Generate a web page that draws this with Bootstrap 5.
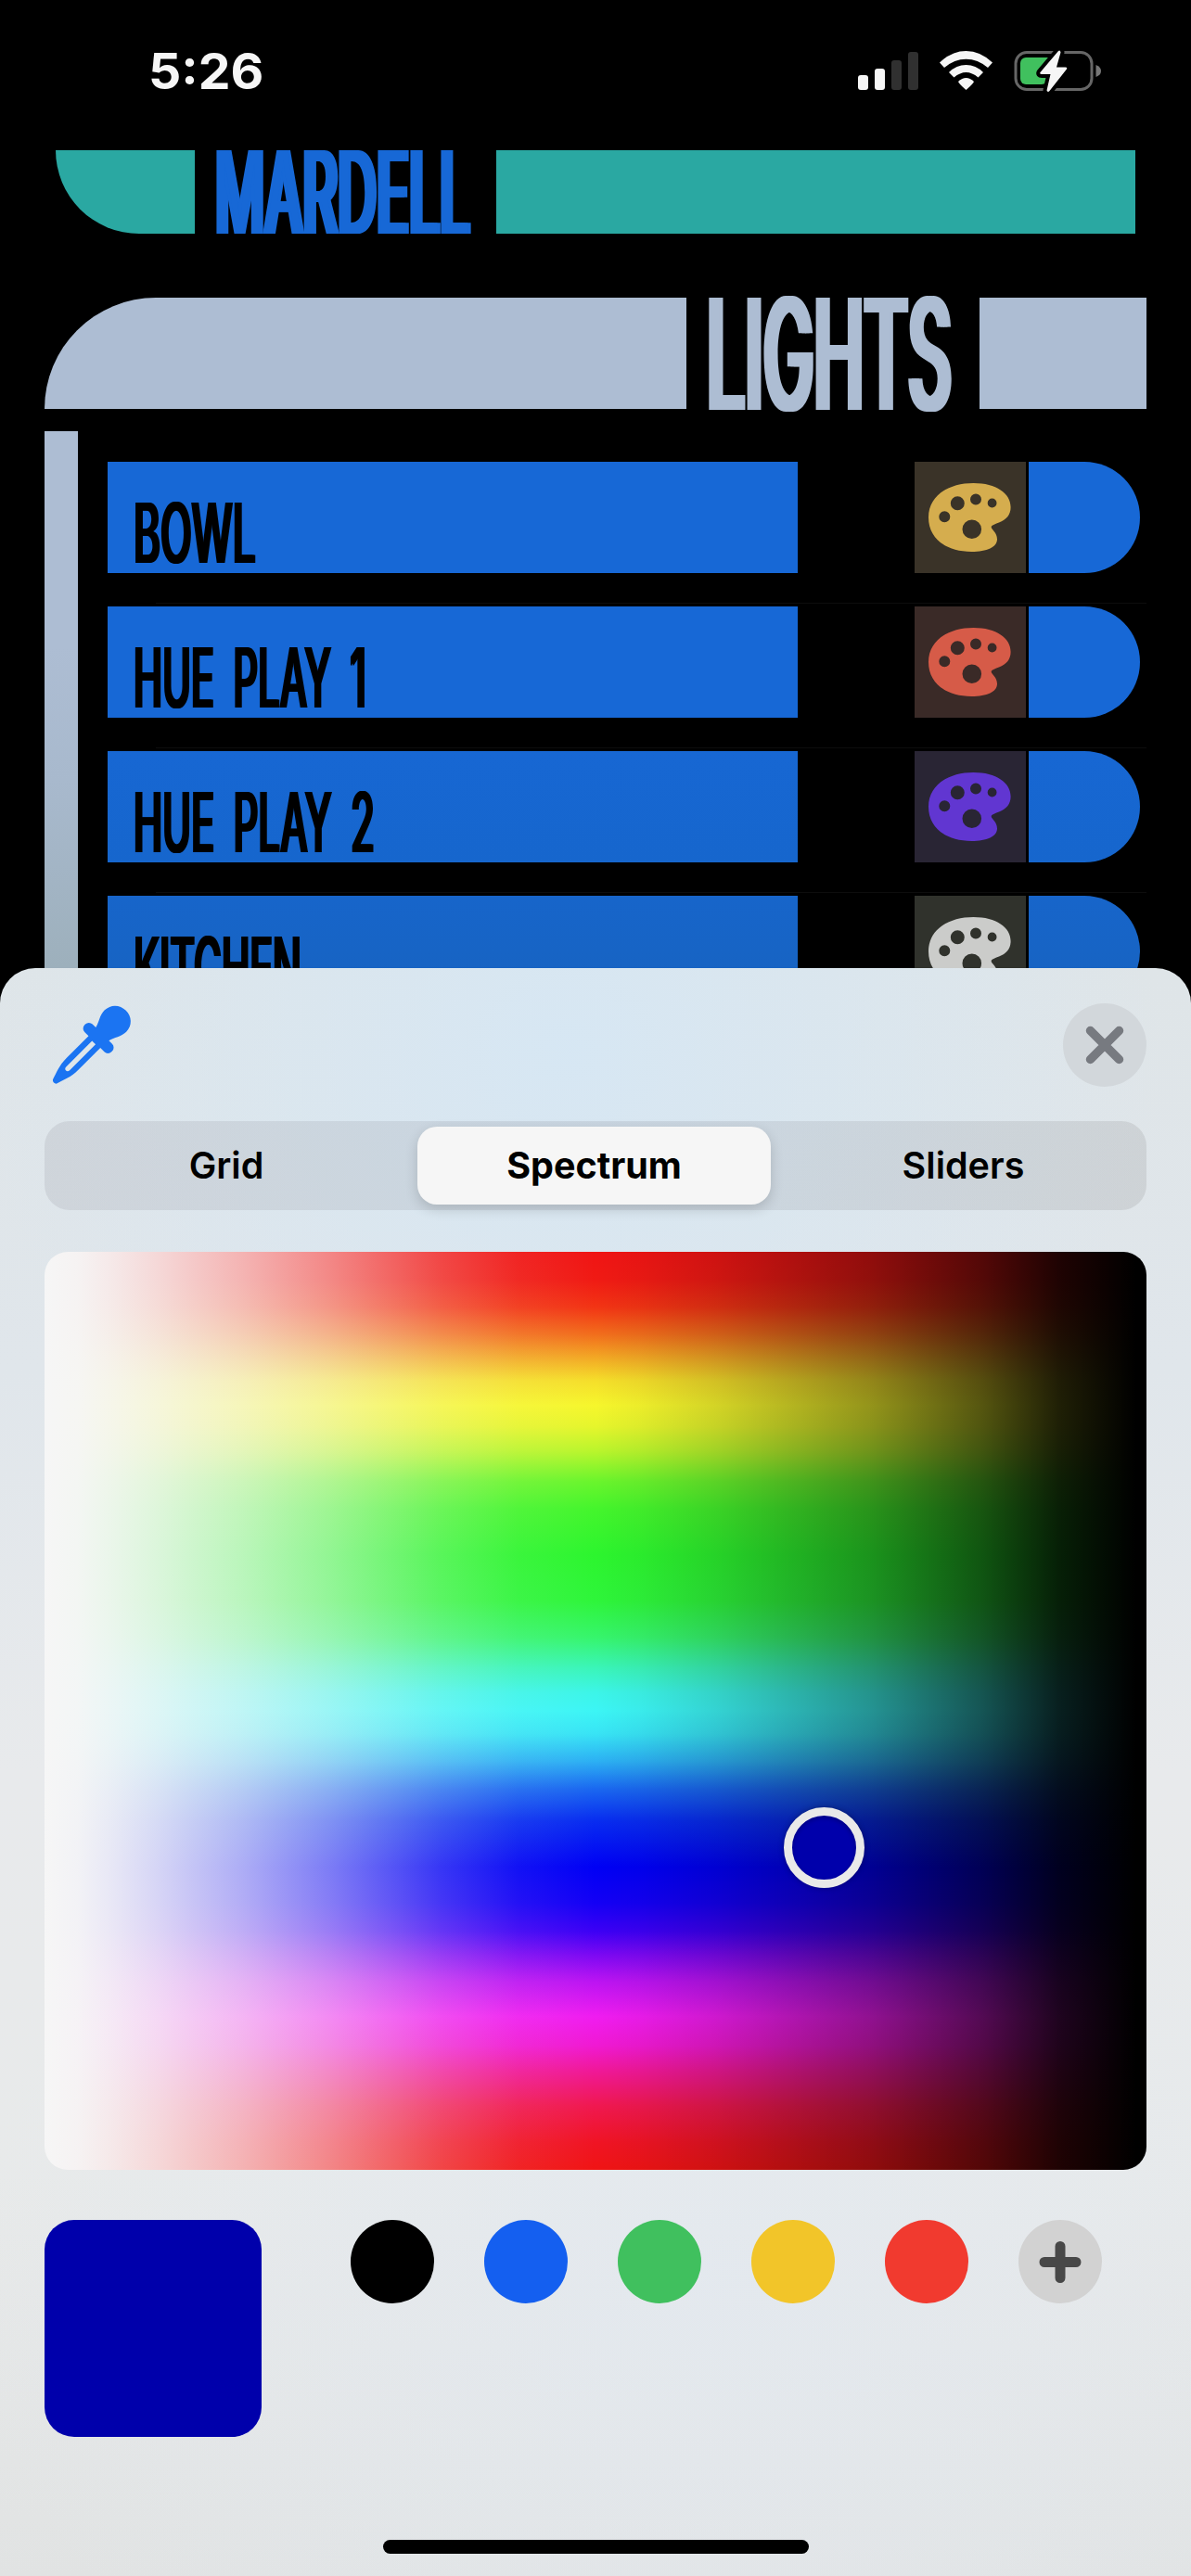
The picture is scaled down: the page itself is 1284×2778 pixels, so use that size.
<!DOCTYPE html>
<html lang="en">
<head>
<meta charset="utf-8">
<meta name="viewport" content="width=device-width, initial-scale=1">
<title>Lights</title>
<link rel="stylesheet" href="https://cdn.jsdelivr.net/npm/bootstrap@5.3.0/dist/css/bootstrap.min.css">
<style>
body{background:#000;font-family:Inter,"Liberation Sans",sans-serif;width:1284px;height:2778px;overflow:hidden}
.panel-top{height:1044px;overflow:hidden}
.status{height:162px;padding:54px 97px 0 160px}
.clock{font-size:53px;line-height:46px;font-weight:700;color:#f6f6f6}
.fit{display:inline-block;white-space:nowrap;transform-origin:0 50%;font-weight:500}
.slot{flex:none;display:flex;align-items:center}
.teal{background:#2aa8a2}
.haze{background:#adbdd3}
.blue{background:#1768d6}
.header-a{height:90px;padding-left:60px}
.header-b{height:120px;margin-top:69px;padding:0 48px}
.cap-a{width:150px;border-bottom-left-radius:90px}
.slot-a{width:325px;padding-left:22px}
.bar-a{width:689px}
.cap-b{width:692px;border-top-left-radius:120px}
.slot-b{width:316px;padding-left:22px}
.t-a{font-size:124px;line-height:90px;color:#1768d6;text-shadow:-7px 0 currentColor,7px 0 currentColor}
.t-b{font-size:167px;line-height:120px;color:#adbdd3;text-shadow:-8px 0 currentColor,8px 0 currentColor}
.t-c{font-size:90px;line-height:66px;color:#000;word-spacing:20px;text-shadow:-3px 0 currentColor,3px 0 currentColor}
.list-area{margin:24px 48px 0;height:579px}
.rail{width:36px;background:linear-gradient(#adbdd3 40%,#a8b9cd 65%,#9db0bc)}
.rows{margin-left:32px;padding-top:33px}
.light{height:156px}
.light-name{width:744px;height:120px;padding:44px 0 0 28px}
.palette{width:120px;height:120px;margin-left:126px}
.endcap{width:120px;height:120px;margin-left:3px;border-radius:0 60px 60px 0}
.rule{height:1px;background:#0d0d0d;margin:32px 0 0 52px}
.d1{background:#3a3328;color:#d5ad4e}.d2{background:#3a2a27;color:#d65b48}
.d3{background:#292534;color:#6136d1}.d4{background:#30322c;color:#cbccca}
.light:nth-child(3) .blue{background:linear-gradient(#1767d3,#1666cd)}
.light:nth-child(4) .blue{background:linear-gradient(#1765ca,#1763c0)}
.sheet{height:1734px;border-radius:38px 38px 0 0;padding:38px 48px 0;
background:radial-gradient(ellipse 640px 560px at 610px 90px,rgba(214,231,244,.95),rgba(214,231,244,0)),
radial-gradient(ellipse 800px 600px at 760px 1420px,rgba(227,233,240,.8),rgba(227,233,240,0)),
linear-gradient(#dfe5e8,#e0e6eb 25%,#e8eaec 50%,#e8eaea 75%,#e1e3e3)}
.tools{height:90px}
.close-btn{width:90px;height:90px;background:#d2d7db}
.seg{height:96px;margin-top:37px;border-radius:27px;background:linear-gradient(90deg,rgba(130,130,140,.17) 60%,rgba(130,130,130,.19));padding:6px}
.seg>div{font-size:39.5px;font-weight:600;line-height:85px;color:#000;text-align:center}
.seg-l{width:396px;padding-right:16px}
.seg>.seg-m{font-weight:700;width:381px;background:#f6f6f6;border-radius:21px;box-shadow:0 5px 14px rgba(0,0,0,.16)}
.seg-r{width:399px;padding-left:16px}
.spectrum{height:990px;margin-top:45px;border-radius:25px;
background:linear-gradient(90deg,#f6f6f6 0,rgba(246,246,246,.985) 3%,rgba(246,246,246,.94) 6%,rgba(246,246,246,.87) 10%,rgba(246,246,246,.7) 18%,rgba(246,246,246,.5) 26%,rgba(246,246,246,.22) 36%,rgba(246,246,246,.07) 43%,rgba(246,246,246,0) 50%),
linear-gradient(90deg,rgba(0,0,0,0) 50%,rgba(0,0,0,.04) 54%,rgba(0,0,0,.14) 61%,rgba(0,0,0,.4) 75%,rgba(0,0,0,.65) 85%,rgba(0,0,0,.87) 92%,#000 99%),
linear-gradient(#f01414 0,#f01a14 3%,#f23414 6%,#f26e1c 9%,#f3b326 12%,#f5de2a 14%,#f6f62c 16.7%,#e6f52c 19%,#baf52c 21.7%,#6af52c 25%,#44f52c 28%,#2cf52e 33%,#2ef53a 38%,#36f56c 42%,#3af5b8 45.3%,#3cf5e8 48%,#3cf5f5 50%,#38e4f5 52.5%,#2cb0f3 55.5%,#1a68f0 58.5%,#082cf0 62%,#0000f5 67%,#1400f5 71%,#3c00f5 74%,#7a08f3 76.5%,#bc14f2 79.5%,#f01cf0 83.3%,#f019d2 86.5%,#f0189c 89%,#f01850 93%,#f01424 97%,#f01414)}
.picker{left:797px;top:599px;width:87px;height:87px;border:9px solid #e9e9e9;background:#0000ab;box-shadow:0 0 6px rgba(0,0,0,.3),inset 0 2px 5px rgba(0,0,0,.25)}
.swatches{margin-top:54px}
.current{width:234px;height:234px;border-radius:32px;background:#0000ab}
.dots{margin-left:96px;gap:54px}
.dot{width:90px;height:90px}
.home-bar{width:459px;height:15px;margin:111px auto 0}
svg{display:block}
</style>
<script src="https://cdn.jsdelivr.net/npm/bootstrap@5.3.0/dist/js/bootstrap.bundle.min.js"></script>
</head>
<body>
<svg width="0" height="0" class="position-absolute"><symbol id="pal" viewBox="0 0 120 120"><path fill="currentColor" fill-rule="evenodd" d="M61.4 97C33 97 15 82 15 60C15 37 36 23 63.500 23C88 23 103.600 34 103.600 49C103.600 57 99 62.500 91 65.500C85 68 82.700 68.500 82.700 70.500C82.700 73 89 76 89 83.500C89 92 78 97 61.400 97ZM26.300 59.300a6 6 0 1 0 12 0a6 6 0 1 0-12 0ZM38.800 44.700a7.500 7.500 0 1 0 15 0a7.500 7.500 0 1 0-15 0ZM60 40.500a6 6 0 1 0 12 0a6 6 0 1 0-12 0ZM78.700 44.500a4.900 4.900 0 1 0 9.800 0a4.900 4.900 0 1 0-9.800 0ZM51.500 72.700a10.300 10.300 0 1 0 20.600 0a10.300 10.300 0 1 0-20.600 0Z"/></symbol></svg>

<main class="panel-top">
  <div class="status d-flex justify-content-between align-items-start">
    <div class="slot"><span class="clock fit fw-bold" data-w="124">5:26</span></div>
    <svg width="262" height="46" viewBox="925 53 262 46">
      <g fill="#f6f6f6"><rect x="925" y="80" width="11" height="16" rx="3"/><rect x="943" y="73" width="11" height="23" rx="3"/></g>
      <g fill="#303030"><rect x="961" y="64" width="11" height="32" rx="3"/><rect x="979" y="55" width="11" height="41" rx="3"/></g>
      <g fill="#f6f6f6">
        <path d="M1013 66.500Q1026 54 1041.500 54T1070 66.500L1065 72Q1054 62.800 1041.500 62.800T1018 72Z"/>
        <path d="M1023 77Q1031 69 1041.500 69T1060 77L1054.500 82.500Q1048 77 1041.500 77T1028.500 82.500Z"/>
        <path d="M1033 87Q1041.500 79 1050 87Q1049.500 89 1041.500 96Q1033.500 89 1033 87Z"/>
      </g>
      <rect x="1095" y="55.500" width="82" height="40" rx="12" fill="none" stroke="#666" stroke-width="3"/>
      <path d="M1181.500 69Q1187 71 1187 75.500T1181.500 82Z" fill="#777"/>
      <rect x="1100" y="61" width="29" height="29" rx="6" fill="#40c05e"/><path d="M1122 61h10v29h-6z" fill="#40c05e"/>
      <path d="M1141 54L1121.500 77Q1120.500 79 1123 79H1132.500L1128.500 96.500Q1129.500 99 1131.500 97L1150 73.500Q1151 71.500 1148.500 71.500H1139L1143.500 55.500Q1143 52.500 1141 54Z" fill="#f6f6f6" stroke="#000" stroke-width="8" stroke-linejoin="round" paint-order="stroke"/>
    </svg>
  </div>

  <div class="header-a d-flex">
    <div class="teal cap-a flex-shrink-0"></div>
    <div class="slot slot-a"><span class="fit t-a" data-w="275">MARDELL</span></div>
    <div class="teal bar-a flex-shrink-0"></div>
  </div>

  <div class="header-b d-flex">
    <div class="haze cap-b flex-shrink-0"></div>
    <div class="slot slot-b"><span class="fit t-b" data-w="264">LIGHTS</span></div>
    <div class="haze flex-grow-1"></div>
  </div>

  <div class="list-area d-flex">
    <div class="rail flex-shrink-0"></div>
    <div class="rows flex-grow-1">
      <div class="light"><div class="d-flex"><div class="blue light-name"><span class="fit t-c" data-w="132">BOWL</span></div><div class="palette d1"><svg width="120" height="120"><use href="#pal"/></svg></div><div class="blue endcap"></div></div><div class="rule"></div></div>
      <div class="light"><div class="d-flex"><div class="blue light-name"><span class="fit t-c" data-w="251">HUE PLAY 1</span></div><div class="palette d2"><svg width="120" height="120"><use href="#pal"/></svg></div><div class="blue endcap"></div></div><div class="rule"></div></div>
      <div class="light"><div class="d-flex"><div class="blue light-name"><span class="fit t-c" data-w="260">HUE PLAY 2</span></div><div class="palette d3"><svg width="120" height="120"><use href="#pal"/></svg></div><div class="blue endcap"></div></div><div class="rule"></div></div>
      <div class="light"><div class="d-flex"><div class="blue light-name"><span class="fit t-c" data-w="181">KITCHEN</span></div><div class="palette d4"><svg width="120" height="120"><use href="#pal"/></svg></div><div class="blue endcap"></div></div></div>
    </div>
  </div>
</main>

<section class="sheet">
  <div class="tools d-flex justify-content-between">
    <svg width="96" height="90" viewBox="48 1082 96 90">
      <g transform="translate(58 1167.500) rotate(45)" fill="#1b74f2">
        <path d="M0 -110C9 -110 16.500 -103.500 16.500 -94C16.500 -86 11.500 -81 10 -74H15A5.500 5.500 0 0 1 20.500 -68.500V-67.500A5.500 5.500 0 0 1 15 -62H9V-28C9 -17 5.500 -10 3 -1.500Q2 0 0 0Q-2 0 -3 -1.500C-5.500 -10 -9 -17 -9 -28V-62H-15A5.500 5.500 0 0 1 -20.500 -67.500V-68.500A5.500 5.500 0 0 1 -15 -74H-10C-11.500 -81 -16.500 -86 -16.500 -94C-16.500 -103.500 -9 -110 0 -110ZM-2.700 -61V-21.500Q-2.500 -18.500 0 -18.500Q2.500 -18.500 2.700 -21.500V-61Z" fill-rule="evenodd"/>
      </g>
    </svg>
    <div class="close-btn rounded-circle"><svg width="90" height="90" viewBox="0 0 90 90"><path d="M29.500 29.500L60.500 60.500M60.500 29.500L29.500 60.500" stroke="#777a80" stroke-width="9.500" stroke-linecap="round"/></svg></div>
  </div>

  <div class="seg d-flex">
    <div class="seg-l"><span>Grid</span></div>
    <div class="seg-m"><span>Spectrum</span></div>
    <div class="seg-r"><span>Sliders</span></div>
  </div>

  <div class="spectrum position-relative"><div class="picker rounded-circle position-absolute"></div></div>

  <div class="swatches d-flex">
    <div class="current"></div>
    <div class="dots d-flex">
      <div class="dot rounded-circle" style="background:#000"></div>
      <div class="dot rounded-circle" style="background:#145ff0"></div>
      <div class="dot rounded-circle" style="background:#40c05e"></div>
      <div class="dot rounded-circle" style="background:#f2c529"></div>
      <div class="dot rounded-circle" style="background:#f13a2f"></div>
      <div class="dot rounded-circle" style="background:#d2d2d2"><svg width="90" height="90" viewBox="0 0 90 90"><path d="M45 28.500V62.500M28 45.500H62" stroke="#484848" stroke-width="11" stroke-linecap="round"/></svg></div>
    </div>
  </div>
  <div class="home-bar rounded-pill bg-black"></div>
</section>
<script>
// Squeeze each condensed heading to its column width
document.querySelectorAll('.fit').forEach(function(el){
  el.style.transform='scaleX('+(el.dataset.w/el.offsetWidth)+')';
});
</script>
</body>
</html>
